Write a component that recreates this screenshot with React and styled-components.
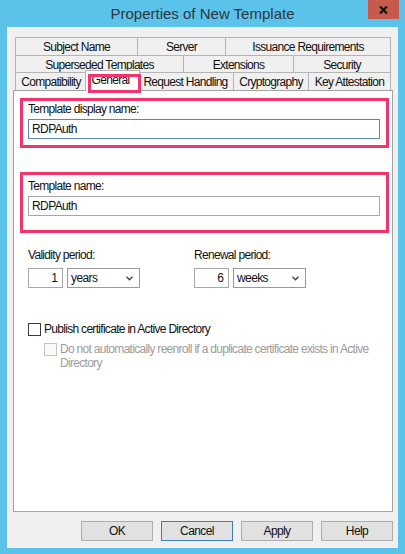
import React from "react";
import styled, { createGlobalStyle } from "styled-components";

const GlobalStyle = createGlobalStyle`
  html, body { margin: 0; padding: 0; background: #5bc3e9; }
  body { font-family: "Liberation Sans", Arial, sans-serif; }
  * { box-sizing: border-box; }
`;

const PINK = "#f2336c";

const Window = styled.div`
  width: 405px;
  height: 554px;
  background: #5bc3e9;
  display: flex;
  flex-direction: column;
`;

const TitleBar = styled.div`
  height: 27px;
  flex: none;
  display: grid;
  grid-template-columns: 1fr auto 1fr;
  align-items: start;
`;

const Title = styled.div`
  grid-column: 2;
  font-size: 15px;
  line-height: 27px;
  color: #2e3640;
  white-space: nowrap;
`;

const CloseButton = styled.div`
  grid-column: 3;
  justify-self: end;
  width: 31px;
  height: 19px;
  margin-right: 6px;
  background: #c75a4c;
  display: flex;
  align-items: center;
  justify-content: center;
`;

const Body = styled.div`
  flex: 1;
  margin: 0 7px 6px 7px;
  background: #f0f0f0;
  padding: 10px 5px 7px 6px;
  display: flex;
  flex-direction: column;
`;

const TabArea = styled.div`
  padding: 0 2px;
  display: flex;
  flex-direction: column;
`;

const TabRow = styled.div`
  display: flex;
  align-items: flex-end;
  height: ${(p) => p.$h}px;
`;

const Tab = styled.div`
  width: ${(p) => p.$w}px;
  height: 100%;
  border: 1px solid #b4b4b4;
  border-bottom: none;
  border-left-width: ${(p) => (p.$first ? 1 : 0)}px;
  background: #f0f0f0;
  display: flex;
  align-items: center;
  justify-content: center;
  font-size: 12px;
  letter-spacing: -0.7px;
  color: #111;
  white-space: nowrap;
  padding-top: 1px;
`;

const SelectedTab = styled.div`
  position: relative;
  z-index: 2;
  width: ${(p) => p.$w}px;
  height: 21px;
  margin: 0 -2px -1px -2px;
  border: 1px solid #b4b4b4;
  border-bottom: none;
  background: #fff;
  display: flex;
  align-items: flex-start;
  justify-content: center;
  padding: 2px 4px 0 0;
  font-size: 12px;
  letter-spacing: -0.7px;
  color: #111;
  white-space: nowrap;
`;

const TabHighlight = styled.span`
  position: absolute;
  left: 2px;
  top: 3px;
  right: -2px;
  bottom: -2px;
  border: 3px solid ${PINK};
`;

const Panel = styled.div`
  flex: 1;
  background: #fff;
  border: 1px solid #a3a3a3;
  padding: 7px 3px 0 6px;
  display: flex;
  flex-direction: column;
`;

const HighlightBox = styled.div`
  border: 3px solid ${PINK};
  padding: ${(p) => p.$pt}px 6px ${(p) => p.$pb}px 5px;
  margin-top: ${(p) => p.$mt || 0}px;
  display: flex;
  flex-direction: column;
  gap: 3px;
`;

const Label = styled.div`
  font-size: 12px;
  line-height: 13px;
  letter-spacing: -0.7px;
  color: #111;
  white-space: nowrap;
`;

const TextBox = styled.div`
  height: 20px;
  border: 1px solid ${(p) => (p.$focused ? "#5b86b6" : "#a8a8a8")};
  background: #fff;
  padding: 0 3px;
  display: flex;
  align-items: center;
  font-size: 12px;
  letter-spacing: -0.6px;
  color: #111;
`;

const PeriodRow = styled.div`
  display: flex;
  margin-top: 16px;
  padding-left: 8px;
`;

const PeriodGroup = styled.div`
  width: ${(p) => p.$w}px;
  display: flex;
  flex-direction: column;
  gap: 6px;
`;

const Fields = styled.div`
  display: flex;
  gap: 4px;
`;

const NumberBox = styled.div`
  width: 35px;
  height: 20px;
  border: 1px solid #a8a8a8;
  background: #fff;
  display: flex;
  align-items: center;
  justify-content: flex-end;
  padding-right: 4px;
  font-size: 12px;
  color: #111;
`;

const SelectBox = styled.div`
  width: 73px;
  height: 20px;
  border: 1px solid #9a9a9a;
  background: #fff;
  display: flex;
  align-items: center;
  justify-content: space-between;
  padding: 0 6px 0 3px;
  font-size: 12px;
  letter-spacing: -0.6px;
  color: #111;
`;

const CheckRow = styled.div`
  display: flex;
  align-items: flex-start;
  gap: 3px;
  margin-top: ${(p) => p.$mt}px;
  padding-left: ${(p) => p.$indent}px;
`;

const Box = styled.span`
  flex: none;
  width: 13px;
  height: 13px;
  margin-top: 1px;
  border: 1px solid ${(p) => (p.$disabled ? "#c4c4c4" : "#3a3a3a")};
  background: ${(p) => (p.$disabled ? "#fafafa" : "#fff")};
`;

const CheckText = styled.span`
  font-size: 12px;
  line-height: 14px;
  letter-spacing: -0.7px;
  color: ${(p) => (p.$disabled ? "#9c9c9c" : "#111")};
`;

const ButtonRow = styled.div`
  display: flex;
  justify-content: flex-end;
  gap: 8px;
  margin-top: 9px;
`;

const DlgButton = styled.button`
  width: 72px;
  height: 20px;
  padding: 0;
  margin: 0;
  background: #e1e1e1;
  border: 1px solid ${(p) => (p.$default ? "#3f7fb7" : "#adadad")};
  font-family: "Liberation Sans", Arial, sans-serif;
  font-size: 12px;
  letter-spacing: -0.6px;
  color: #111;
`;

const Chevron = () => (
  <svg width="7" height="5" viewBox="0 0 7 5">
    <polyline points="0.5,0.8 3.5,3.8 6.5,0.8" fill="none" stroke="#444" strokeWidth="1.4" />
  </svg>
);

const CloseIcon = () => (
  <svg width="9" height="8" viewBox="0 0 9 8">
    <line x1="1" y1="0.5" x2="8" y2="7.5" stroke="#161616" strokeWidth="2.3" />
    <line x1="8" y1="0.5" x2="1" y2="7.5" stroke="#161616" strokeWidth="2.3" />
  </svg>
);

const row1 = [["Subject Name", 123], ["Server", 88], ["Issuance Requirements", 165]];
const row2 = [["Superseded Templates", 169], ["Extensions", 110], ["Security", 97]];

export default function App() {
  return (
    <>
      <GlobalStyle />
      <Window>
        <TitleBar>
          <Title>Properties of New Template</Title>
          <CloseButton>
            <CloseIcon />
          </CloseButton>
        </TitleBar>
        <Body>
          <TabArea>
            <TabRow $h={18}>
              {row1.map(([t, w], i) => (
                <Tab key={t} $w={w} $first={i === 0}>{t}</Tab>
              ))}
            </TabRow>
            <TabRow $h={17}>
              {row2.map(([t, w], i) => (
                <Tab key={t} $w={w} $first={i === 0}>{t}</Tab>
              ))}
            </TabRow>
            <TabRow $h={18}>
              <Tab $w={72} $first>Compatibility</Tab>
              <SelectedTab $w={55}>
                General
                <TabHighlight />
              </SelectedTab>
              <Tab $w={96}>Request Handling</Tab>
              <Tab $w={75}>Cryptography</Tab>
              <Tab $w={82}>Key Attestation</Tab>
            </TabRow>
          </TabArea>
          <Panel>
            <HighlightBox $pt={2} $pb={6}>
              <Label>Template display name:</Label>
              <TextBox $focused>RDPAuth</TextBox>
            </HighlightBox>
            <HighlightBox $pt={5} $pb={14} $mt={24}>
              <Label>Template name:</Label>
              <TextBox>RDPAuth</TextBox>
            </HighlightBox>
            <PeriodRow>
              <PeriodGroup $w={166}>
                <Label>Validity period:</Label>
                <Fields>
                  <NumberBox>1</NumberBox>
                  <SelectBox>
                    years
                    <Chevron />
                  </SelectBox>
                </Fields>
              </PeriodGroup>
              <PeriodGroup $w={120}>
                <Label>Renewal period:</Label>
                <Fields>
                  <NumberBox>6</NumberBox>
                  <SelectBox>
                    weeks
                    <Chevron />
                  </SelectBox>
                </Fields>
              </PeriodGroup>
            </PeriodRow>
            <CheckRow $mt={34} $indent={8}>
              <Box />
              <CheckText>Publish certificate in Active Directory</CheckText>
            </CheckRow>
            <CheckRow $mt={6} $indent={24}>
              <Box $disabled />
              <CheckText $disabled>
                Do not automatically reenroll if a duplicate certificate exists in Active
                <br />
                Directory
              </CheckText>
            </CheckRow>
          </Panel>
          <ButtonRow>
            <DlgButton>OK</DlgButton>
            <DlgButton $default>Cancel</DlgButton>
            <DlgButton>Apply</DlgButton>
            <DlgButton>Help</DlgButton>
          </ButtonRow>
        </Body>
      </Window>
    </>
  );
}
